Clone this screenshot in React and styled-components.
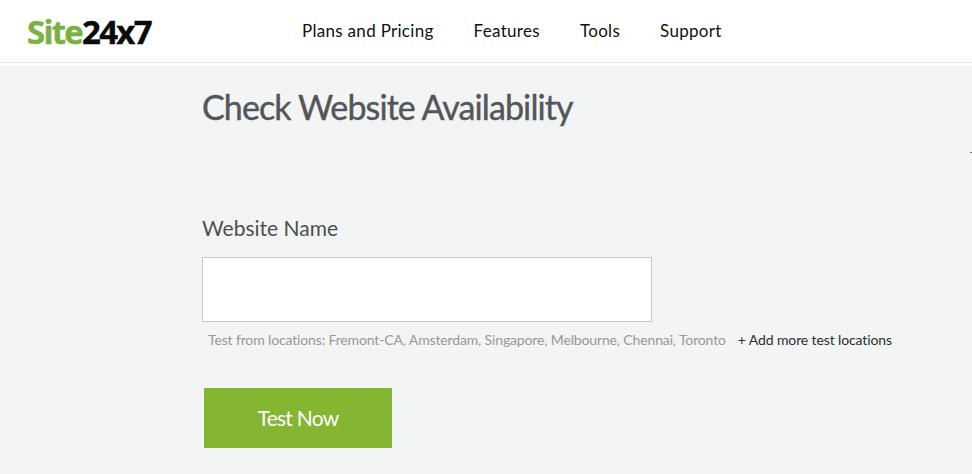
import React from 'react';
import styled, { createGlobalStyle } from 'styled-components';

const Global = createGlobalStyle`
  html, body { margin: 0; padding: 0; }
  body { background: #f3f4f4; font-family: Lato, "Liberation Sans", sans-serif; overflow: hidden; }
`;

const Page = styled.div`
  position: relative;
  width: 972px;
  height: 474px;
  overflow: hidden;
`;

const Header = styled.header`
  display: flex;
  align-items: center;
  height: 62px;
  background: #fff;
  border-bottom: 1px solid #e8e8e8;
  box-sizing: content-box;
  padding-left: 27px;
  margin-bottom: 2px;
  box-shadow: 0 2px 0 #fff;
`;

const Logo = styled.div`
  display: flex;
  width: 275px;
  font-family: "Open Sans", sans-serif;
  font-size: 33px;
  font-weight: 700;
  letter-spacing: -1.75px;
  line-height: 1;
  -webkit-text-stroke: 0.4px currentColor;
`;

const LogoPart = styled.span`
  color: ${p => p.$color};
`;

const Nav = styled.nav`
  display: flex;
  gap: 40px;
`;

const NavLink = styled.a`
  color: #111;
  font-size: 17px;
  line-height: 20px;
  letter-spacing: 0.3px;
`;

const Main = styled.main`
  display: flex;
  flex-direction: column;
  align-items: flex-start;
  padding: 22px 0 0 202px;
`;

const Title = styled.h1`
  margin: 0;
  color: #53565a;
  font-size: 34px;
  font-weight: 400;
  line-height: 40px;
  letter-spacing: -0.9px;
  -webkit-text-stroke: 0.4px #53565a;
`;

const Label = styled.label`
  margin-top: 88px;
  color: #4c4f52;
  font-size: 21px;
  line-height: 26px;
`;

const NameInput = styled.input`
  box-sizing: border-box;
  width: 450px;
  height: 65px;
  margin-top: 16px;
  background: #fff;
  border: 1px solid #c8c8c8;
  outline: none;
`;

const Hints = styled.div`
  display: flex;
  gap: 12px;
  margin-top: 9px;
  padding-left: 6px;
  font-size: 14px;
  line-height: 18px;
`;

const Locations = styled.span`
  color: #96999c;
  letter-spacing: -0.14px;
`;

const AddMore = styled.a`
  color: #2b2e33;
  letter-spacing: -0.12px;
`;

const TestButton = styled.button`
  width: 188px;
  height: 60px;
  margin: 39px 0 0 2px;
  padding: 0 0 2px;
  background: #84b632;
  border: none;
  color: #fff;
  font-family: inherit;
  font-size: 21px;
  letter-spacing: -0.75px;
`;

const EdgeMark = styled.span`
  position: absolute;
  right: 0;
  top: 152px;
  width: 2px;
  height: 1px;
  background: #777;
`;

export default function App() {
  return (
    <Page>
      <Global />
      <Header>
        <Logo>
          <LogoPart $color="#7ab143">Site</LogoPart>
          <LogoPart $color="#0a0a0a">24x7</LogoPart>
        </Logo>
        <Nav>
          <NavLink>Plans and Pricing</NavLink>
          <NavLink>Features</NavLink>
          <NavLink>Tools</NavLink>
          <NavLink>Support</NavLink>
        </Nav>
      </Header>
      <Main>
        <Title>Check Website Availability</Title>
        <Label>Website Name</Label>
        <NameInput type="text" />
        <Hints>
          <Locations>Test from locations: Fremont-CA, Amsterdam, Singapore, Melbourne, Chennai, Toronto</Locations>
          <AddMore>+ Add more test locations</AddMore>
        </Hints>
        <TestButton>Test Now</TestButton>
      </Main>
      <EdgeMark />
    </Page>
  );
}
